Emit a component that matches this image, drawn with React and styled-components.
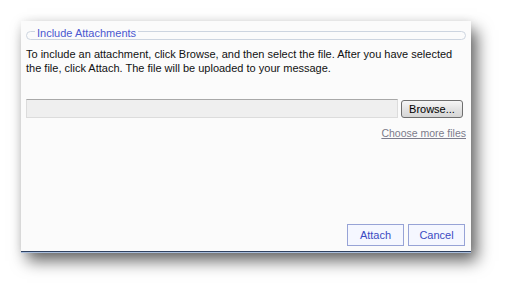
import React from "react";
import styled, { createGlobalStyle } from "styled-components";

const Global = createGlobalStyle`
  html, body { margin: 0; padding: 0; background: #ffffff; }
  body { font-family: "Liberation Sans", Arial, sans-serif; }
`;

const Page = styled.div`
  width: 513px;
  height: 295px;
  padding: 21px 0 0 21px;
  box-sizing: border-box;
  background: #ffffff;
`;

const Panel = styled.div`
  width: 450px;
  height: 231px;
  box-sizing: border-box;
  background: #fbfbfb;
  border-bottom: 1px solid #2f4262;
  box-shadow: 0 1px 0 #a9bddb, 6px 9px 15px rgba(0, 0, 0, 0.6),
    0 0 9px rgba(0, 0, 0, 0.07);
  padding: 3.5px 5px 5px 5px;
  display: flex;
  flex-direction: column;
  font-size: 11px;
  color: #111;
`;

const Fieldset = styled.fieldset`
  margin: 0;
  padding: 0 0 1.5px 8px;
  border: 1px solid #cdd5e0;
  border-radius: 5px;
  min-width: 0;
`;

const Legend = styled.legend`
  padding: 4px 2px 0 2px;
  color: #4a58d0;
  font-size: 11px;
  line-height: 9px;
`;

const Intro = styled.p`
  margin: 7px 0 0 0;
  line-height: 14px;
  font-size: 11px;
  white-space: nowrap;
`;

const FileRow = styled.div`
  display: flex;
  align-items: center;
  gap: 3px;
  margin-top: 24px;
  padding-right: 3px;
`;

const FileField = styled.div`
  flex: 1;
  height: 19px;
  box-sizing: border-box;
  background: #efefef;
  border: 1px solid #dcdcdc;
  border-top-color: #a8a8a8;
`;

const BrowseButton = styled.button`
  width: 62px;
  height: 18px;
  padding: 0;
  box-sizing: border-box;
  border: 1px solid #6f6f6f;
  border-radius: 3px;
  background: linear-gradient(#f6f6f6, #e2e2e2 55%, #d6d6d6);
  font-family: "Liberation Sans", Arial, sans-serif;
  font-size: 11px;
  color: #000;
`;

const MoreLink = styled.a`
  align-self: flex-end;
  margin-top: 8px;
  color: #7c7c8c;
  font-size: 10.5px;
  line-height: 14px;
  text-decoration: underline;
`;

const Actions = styled.div`
  margin-top: auto;
  display: flex;
  justify-content: flex-end;
  gap: 4px;
  padding-right: 1px;
`;

const ActionButton = styled.button`
  width: 57px;
  height: 22px;
  padding: 0;
  box-sizing: border-box;
  border: 1px solid #97a3d6;
  background: #f5f7ff;
  color: #3b4bc2;
  font-family: "Liberation Sans", Arial, sans-serif;
  font-size: 11px;
`;

export default function App() {
  return (
    <Page>
      <Global />
      <Panel>
        <Fieldset>
          <Legend>Include Attachments</Legend>
        </Fieldset>
        <Intro>
          To include an attachment, click Browse, and then select the file. After you have selected
          <br />
          the file, click Attach. The file will be uploaded to your message.
        </Intro>
        <FileRow>
          <FileField />
          <BrowseButton>Browse...</BrowseButton>
        </FileRow>
        <MoreLink>Choose more files</MoreLink>
        <Actions>
          <ActionButton>Attach</ActionButton>
          <ActionButton>Cancel</ActionButton>
        </Actions>
      </Panel>
    </Page>
  );
}
